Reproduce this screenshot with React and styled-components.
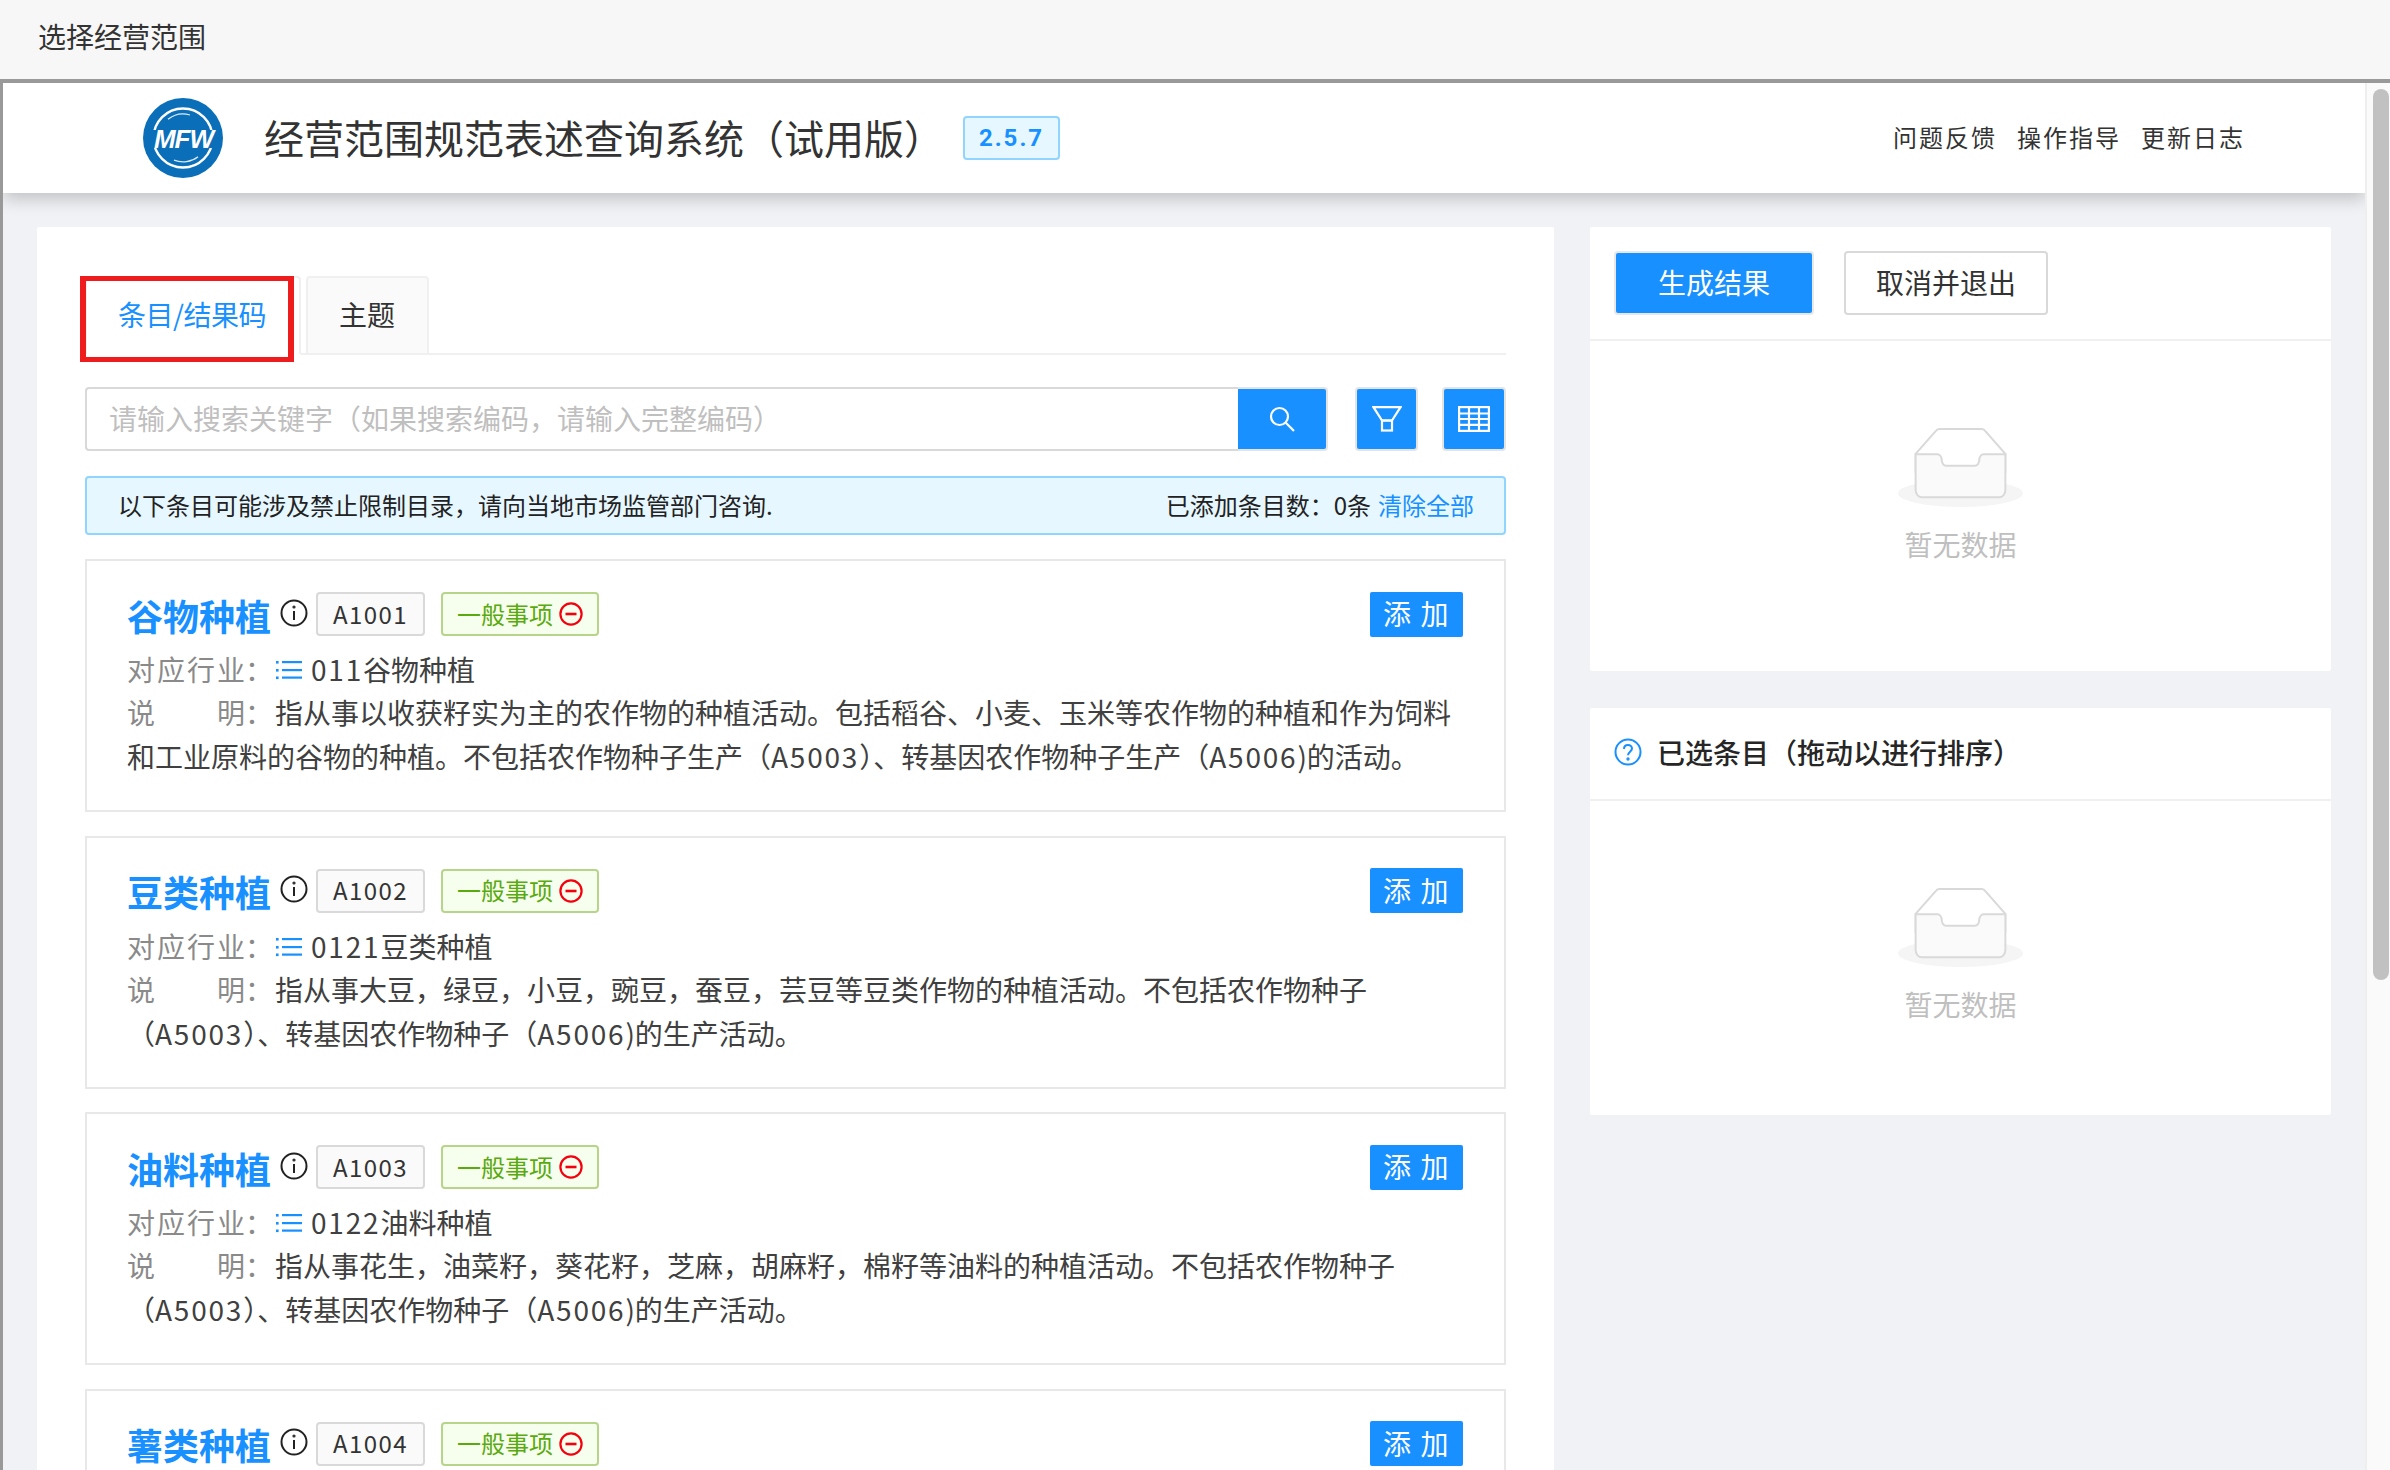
import React from "react";
import styled, { createGlobalStyle } from "styled-components";

const Global = createGlobalStyle`
  html, body { margin: 0; padding: 0; height: 100%; overflow: hidden; }
  body { font-family: "Noto Sans CJK SC", "Noto Sans", sans-serif; color: #333; }
  #root { height: 100%; }
  * { box-sizing: border-box; }
`;

const Page = styled.div`
  width: 2390px; height: 1470px; display: flex; flex-direction: column; overflow: hidden; background: #f0f2f5;
`;
const TopBar = styled.div`
  height: 79px; flex: none; background: #f7f7f7; padding: 0 0 8px 38px;
  display: flex; align-items: center; font-size: 28px; color: #333;
`;
const Frame = styled.div`
  flex: 1; min-height: 0; display: flex; border-top: 4px solid #999; border-left: 3px solid #999;
`;
const Scroller = styled.div`
  flex: 1; min-width: 0; overflow: hidden; background: #f0f2f5;
`;
const ScrollTrack = styled.div`
  width: 25px; flex: none; background: #fafafa; border-left: 2px solid #eee; padding: 6px 1px 0 6px;
`;
const ScrollThumb = styled.div`
  height: 891px; border-radius: 8px; background: #c1c1c1;
`;
const Header = styled.header`
  position: relative; height: 110px; background: #fff; display: flex; align-items: center;
  padding: 0 120px 0 140px; box-shadow: 0 6px 16px rgba(0, 0, 0, 0.2);
`;
const LogoMark = styled.svg`
  width: 80px; height: 80px; flex: none; margin-right: 41px;
`;
const SiteTitle = styled.h1`
  margin: -3px 0 0; font-size: 40px; font-weight: 400; color: #333; line-height: 56px; white-space: nowrap;
`;
const Version = styled.span`
  margin-left: 19px; width: 97px; height: 44px; display: flex; align-items: center; justify-content: center;
  background: #e6f7ff; border: 2px solid #91d5ff; border-radius: 4px; color: #1890ff;
  font-family: "Roboto", "Noto Sans", sans-serif; font-size: 24px; font-weight: 700; letter-spacing: 2px;
`;
const HeaderLinks = styled.nav`
  margin-left: auto; margin-top: -3px; display: flex; gap: 20px;
`;
const HeaderLink = styled.a`
  font-size: 24px; letter-spacing: 2px; color: #333;
`;
const Body = styled.div`
  display: flex; align-items: flex-start; gap: 36px; padding: 34px 34px 0;
`;
const Main = styled.main`
  width: 1517px; flex: none; background: #fff; border-radius: 2px; padding: 49px 48px 0 48px;
`;
const Tabs = styled.div`
  display: flex; gap: 5px; height: 79px; border-bottom: 2px solid #f0f0f0;
`;
const Tab = styled.div`
  position: relative; height: 79px; padding: 0 31px 3px; display: flex; align-items: center; font-size: 28px;
  border: 2px solid #f0f0f0; border-radius: 4px 4px 0 0;
  background: ${(p) => (p.$active ? "#fff" : "#fafafa")};
  color: ${(p) => (p.$active ? "#1890ff" : "#333")};
  ${(p) => (p.$active ? "border-bottom-color: #fff; width: 216px; letter-spacing: -0.5px;" : "width: 123px;")}
`;
const RedMark = styled.span`
  position: absolute; top: -2px; left: -7px; width: 214px; height: 86px;
  border: solid #ee1c1c; border-width: 5px 6px; pointer-events: none;
`;
const SearchRow = styled.div`
  display: flex; height: 64px; margin-top: 32px;
`;
const SearchInput = styled.div`
  flex: 1; min-width: 0; display: flex; align-items: center; padding: 0 0 3px 22px;
  border: 2px solid #d9d9d9; border-right: 0; border-radius: 4px 0 0 4px;
  font-size: 28px; color: #bfbfbf; white-space: nowrap;
`;
const IconButton = styled.button`
  flex: none; padding: 0; width: ${(p) => p.$w}px; margin-left: ${(p) => p.$ml || 0}px;
  display: flex; align-items: center; justify-content: center;
  background: #1890ff; border: 2px solid #e4e4e4; border-radius: ${(p) => (p.$joined ? "0 4px 4px 0" : "4px")};
  ${(p) => (p.$joined ? "border-left: 0;" : "")}
`;
const Notice = styled.div`
  height: 59px; margin-top: 25px; display: flex; align-items: center; justify-content: space-between;
  padding: 0 30px 3px 31px; background: #e6f7ff; border: 2px solid #91d5ff; border-radius: 4px;
  font-size: 24px; color: #222;
`;
const NoticeLink = styled.a`
  color: #1890ff; margin-left: 7px;
`;
const Cards = styled.div`
  display: flex; flex-direction: column; gap: 23.67px; margin-top: 24px;
`;
const Card = styled.article`
  border: 2px solid #e8e8e8; padding: 31px 40px 0; height: 253px; overflow: hidden;
`;
const CardHead = styled.div`
  display: flex; align-items: center; height: 44px;
`;
const CardTitle = styled.h3`
  margin: 1px 9px 0 0; font-size: 36px; line-height: 44px; font-weight: 600; color: #1890ff;
`;
const InfoIcon = styled.svg`
  width: 28px; height: 28px; flex: none; margin: -3px 8px 0 0;
`;
const CodeTag = styled.span`
  height: 44px; width: 109px; padding-bottom: 2px; display: flex; align-items: center; justify-content: center;
  background: #fafafa; border: 2px solid #d9d9d9; border-radius: 4px; font-size: 24px; letter-spacing: 1.4px; color: #333;
`;
const StatusTag = styled.span`
  height: 44px; width: 158px; margin-left: 16px; padding: 0 0 2px 14px; display: flex; align-items: center; gap: 6px;
  background: #f6ffed; border: 2px solid #b7d58a; border-radius: 4px; font-size: 24px; color: #5aa90f;
  svg { margin-top: 2px; }
`;
const AddButton = styled.button`
  margin-left: auto; margin-right: 1px; width: 93px; height: 45px; padding: 0 0 2px; border: 0; border-radius: 2px;
  background: #1890ff; color: #fff; font: inherit; font-size: 28px; line-height: 42px; letter-spacing: 1.5px; white-space: pre;
`;
const Line = styled.p`
  margin: 0; font-size: 28px; line-height: 44px; color: #404040;
`;
const IndustryLine = styled(Line)`
  margin: 11px 0 -1px; display: flex; align-items: center;
`;
const Label = styled.span`
  display: inline-block; width: 118px; color: #8a8a8a; text-align: justify; text-align-last: justify;
  vertical-align: top;
`;
const Colon = styled.span`
  display: inline-block; width: ${(p) => p.$w || 30}px; color: #8a8a8a;
`;
const Latin = styled.span`
  letter-spacing: 1.8px;
`;
const ListIcon = styled.svg`
  width: 26px; height: 20px; flex: none; margin: 2px 9px 0 0;
`;
const Side = styled.aside`
  flex: 1; min-width: 0; display: flex; flex-direction: column; gap: 37px;
`;
const SidePanel = styled.section`
  background: #fff; border-radius: 2px; height: ${(p) => p.$h}px;
`;
const ActionBar = styled.div`
  height: 114px; padding: 24px 0 0 24px; display: flex; align-items: flex-start; gap: 30px; border-bottom: 2px solid #f0f0f0;
`;
const ActionButton = styled.button`
  height: 64px; padding: 0 0 3px; font: inherit; font-size: 28px; border-radius: 4px;
  width: ${(p) => p.$w}px;
  background: ${(p) => (p.$primary ? "#1890ff" : "#fff")};
  color: ${(p) => (p.$primary ? "#fff" : "#333")};
  border: 2px solid ${(p) => (p.$primary ? "#e8e8e8" : "#d9d9d9")};
`;
const PanelHead = styled.div`
  height: 93px; padding: 0 0 3px 24px; display: flex; align-items: center; gap: 15px; border-bottom: 2px solid #f0f0f0;
  font-size: 28px; font-weight: 500; color: #262626;
`;
const EmptyBox = styled.div`
  padding-top: 86px; display: flex; flex-direction: column; align-items: center;
`;
const EmptyArt = styled.svg`
  width: 125px; height: 80px;
`;
const EmptyText = styled.div`
  margin-top: 17px; font-size: 28px; line-height: 40px; color: #bfbfbf;
`;

const items = [
  {
    name: "谷物种植", code: "A1001", industry: "011谷物种植",
    first: "指从事以收获籽实为主的农作物的种植活动。包括稻谷、小麦、玉米等农作物的种植和作为饲料和工业原料的谷物的种植。不包括农作物种子生产（A5003）、转基因农作物种子生产（A5006)的活动。",
  },
  {
    name: "豆类种植", code: "A1002", industry: "0121豆类种植",
    first: "指从事大豆，绿豆，小豆，豌豆，蚕豆，芸豆等豆类作物的种植活动。不包括农作物种子（A5003）、转基因农作物种子（A5006)的生产活动。",
  },
  {
    name: "油料种植", code: "A1003", industry: "0122油料种植",
    first: "指从事花生，油菜籽，葵花籽，芝麻，胡麻籽，棉籽等油料的种植活动。不包括农作物种子（A5003）、转基因农作物种子（A5006)的生产活动。",
  },
  { name: "薯类种植", code: "A1004" },
];

function Rich({ text }) {
  return (
    <>
      {text.split(/([A-Za-z0-9]+)/).map((part, i) =>
        i % 2 ? <Latin key={i}>{part}</Latin> : part
      )}
    </>
  );
}

function Logo() {
  return (
    <LogoMark viewBox="0 0 80 80">
      <circle cx="40" cy="40" r="40" fill="#0a6eb8" />
      <circle cx="40" cy="40" r="29.5" fill="none" stroke="#fff" strokeWidth="2.4" />
      <path d="M25 21.3 A24 24 0 0 1 47 17" fill="none" stroke="#dbeaf6" strokeWidth="1.3" />
      <path d="M31 62.2 A24 24 0 0 0 55 58.7" fill="none" stroke="#dbeaf6" strokeWidth="1.3" />
      <rect x="8" y="32" width="64" height="18" fill="#0a6eb8" />
      <text x="40.5" y="50" textAnchor="middle" fill="#fff" fontFamily="'Liberation Sans', sans-serif" fontStyle="italic" fontWeight="700" fontSize="26" letterSpacing="-1">MFW</text>
    </LogoMark>
  );
}

function Info() {
  return (
    <InfoIcon viewBox="0 0 28 28" fill="none" stroke="#222" strokeWidth="2">
      <circle cx="14" cy="14" r="12.5" />
      <path d="M14 12v9" />
      <circle cx="14" cy="8" r="0.6" fill="#222" />
    </InfoIcon>
  );
}

function MinusRound() {
  return (
    <svg width="24" height="24" viewBox="0 0 24 24" fill="none" stroke="#f5000f" strokeWidth="2.2">
      <circle cx="12" cy="12" r="10.6" />
      <path d="M6.5 12h11" strokeWidth="2.6" />
    </svg>
  );
}

function ListGlyph() {
  return (
    <ListIcon viewBox="0 0 26 20" fill="#1890ff">
      <rect x="0" y="1" width="2.6" height="2.6" />
      <rect x="0" y="9" width="2.6" height="2.6" />
      <rect x="0" y="16.5" width="2.6" height="2.6" />
      <rect x="6" y="1" width="20" height="2.2" />
      <rect x="6" y="9" width="20" height="2.2" />
      <rect x="6" y="16.5" width="20" height="2.2" />
    </ListIcon>
  );
}

function Empty() {
  return (
    <EmptyBox>
      <EmptyArt viewBox="0 0 64 41">
        <g transform="translate(0 1)" fill="none" fillRule="evenodd">
          <ellipse fill="#f5f5f5" cx="32" cy="33" rx="32" ry="7" />
          <g fillRule="nonzero" stroke="#d9d9d9">
            <path d="M55 12.76L44.854 1.258C44.367.474 43.656 0 42.907 0H21.093c-.749 0-1.46.474-1.947 1.257L9 12.761V22h46v-9.24z" />
            <path d="M41.613 15.931c0-1.605.994-2.93 2.227-2.931H55v18.137C55 33.26 53.68 35 52.05 35h-40.1C10.32 35 9 33.259 9 31.137V13h11.16c1.233 0 2.227 1.323 2.227 2.928v.022c0 1.605 1.005 2.901 2.237 2.901h14.752c1.232 0 2.237-1.308 2.237-2.913v-.007z" fill="#fafafa" />
          </g>
        </g>
      </EmptyArt>
      <EmptyText>暂无数据</EmptyText>
    </EmptyBox>
  );
}

function ItemCard({ item }) {
  return (
    <Card>
      <CardHead>
        <CardTitle>{item.name}</CardTitle>
        <Info />
        <CodeTag>{item.code}</CodeTag>
        <StatusTag>一般事项<MinusRound /></StatusTag>
        <AddButton>添 加</AddButton>
      </CardHead>
      {item.industry && (
        <>
          <IndustryLine>
            <Label>对应行业</Label><Colon $w={31}>：</Colon>
            <ListGlyph />
            <span><Rich text={item.industry} /></span>
          </IndustryLine>
          <Line>
            <Label>说明</Label><Colon>：</Colon>
            <Rich text={item.first} />
          </Line>
        </>
      )}
    </Card>
  );
}

export default function App() {
  return (
    <Page>
      <Global />
      <TopBar>选择经营范围</TopBar>
      <Frame>
        <Scroller>
          <Header>
            <Logo />
            <SiteTitle>经营范围规范表述查询系统（试用版）</SiteTitle>
            <Version>2.5.7</Version>
            <HeaderLinks>
              <HeaderLink>问题反馈</HeaderLink>
              <HeaderLink>操作指导</HeaderLink>
              <HeaderLink>更新日志</HeaderLink>
            </HeaderLinks>
          </Header>
          <Body>
            <Main>
              <Tabs>
                <Tab $active>条目/结果码<RedMark /></Tab>
                <Tab>主题</Tab>
              </Tabs>
              <SearchRow>
                <SearchInput>请输入搜索关键字（如果搜索编码，请输入完整编码）</SearchInput>
                <IconButton $w={90} $joined aria-label="搜索">
                  <svg width="26" height="26" viewBox="0 0 26 26" fill="none" stroke="#fff" strokeWidth="2.2">
                    <circle cx="10.5" cy="10.5" r="8.5" />
                    <path d="M16.8 16.8L25 25" />
                  </svg>
                </IconButton>
                <IconButton $w={63} $ml={27} aria-label="筛选">
                  <svg width="30" height="26" viewBox="0 0 30 26" fill="none" stroke="#fff" strokeWidth="2.2">
                    <path d="M1.5 1.2h27L20 14.5h-10z" />
                    <rect x="10" y="14.5" width="10" height="10" />
                  </svg>
                </IconButton>
                <IconButton $w={64} $ml={24} aria-label="表格">
                  <svg width="32" height="26" viewBox="0 0 32 26" fill="none" stroke="#fff" strokeWidth="2.2">
                    <rect x="1.1" y="1.1" width="29.8" height="23.8" />
                    <path d="M1 7.5h30M1 13h30M1 18.8h30M11 1v24M21 1v24" />
                  </svg>
                </IconButton>
              </SearchRow>
              <Notice>
                <span>以下条目可能涉及禁止限制目录，请向当地市场监管部门咨询.</span>
                <span>已添加条目数：0条<NoticeLink>清除全部</NoticeLink></span>
              </Notice>
              <Cards>
                {items.map((item) => <ItemCard key={item.code} item={item} />)}
              </Cards>
            </Main>
            <Side>
              <SidePanel $h={444}>
                <ActionBar>
                  <ActionButton $primary $w={200}>生成结果</ActionButton>
                  <ActionButton $w={204}>取消并退出</ActionButton>
                </ActionBar>
                <Empty />
              </SidePanel>
              <SidePanel $h={407}>
                <PanelHead>
                  <svg width="28" height="28" viewBox="0 0 28 28" fill="none" stroke="#1890ff" strokeWidth="2">
                    <circle cx="14" cy="14" r="12.5" />
                    <path d="M10 11c0-2.6 1.8-4 4-4s4 1.5 4 3.6c0 3-4 3.4-4 6.6" />
                    <circle cx="14" cy="21" r="0.7" fill="#1890ff" />
                  </svg>
                  已选条目（拖动以进行排序）
                </PanelHead>
                <Empty />
              </SidePanel>
            </Side>
          </Body>
        </Scroller>
        <ScrollTrack><ScrollThumb /></ScrollTrack>
      </Frame>
    </Page>
  );
}
